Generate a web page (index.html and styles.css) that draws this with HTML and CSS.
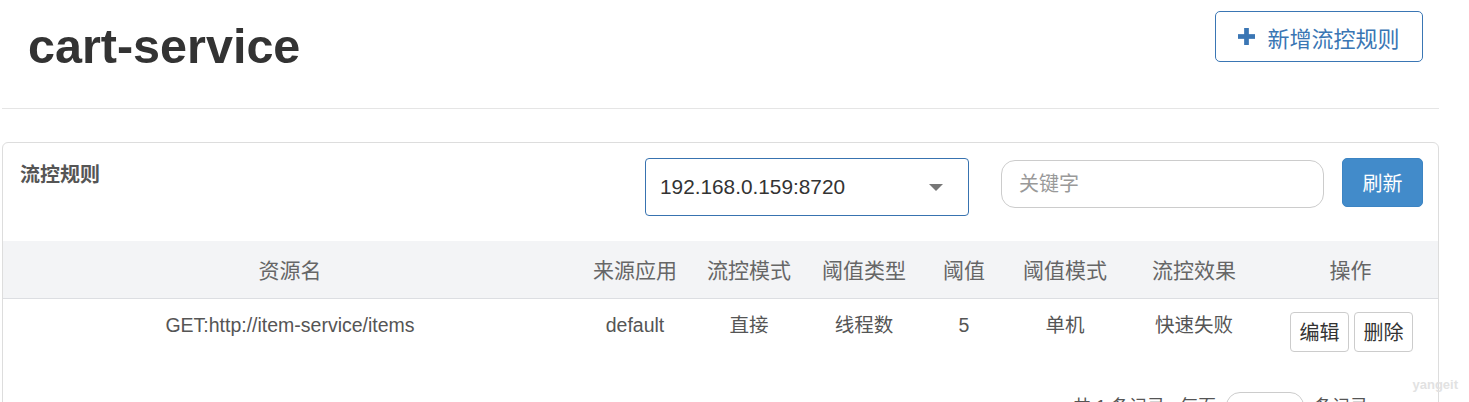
FILE: index.html
```html
<!DOCTYPE html>
<html lang="zh-CN">
  <head>
    <meta charset="UTF-8" />
    <meta name="viewport" content="width=device-width, initial-scale=1.0" />
    <title>cart-service - 流控规则</title>
    <link rel="stylesheet" href="styles.css">
  </head>
  <body>
    <div class="page">
      <header class="page-header">
        <h1 class="app-name">cart-service</h1>
        <button class="btn-add">
          <svg class="icon-plus" width="18" height="18" viewBox="0 0 18 18">
            <rect x="6.5" y="0" width="5" height="18" fill="#3a76b4" />
            <rect x="0" y="6.5" width="18" height="5" fill="#3a76b4" />
          </svg>
          <span>新增流控规则</span>
        </button>
      </header>

      <div class="panel">
        <div class="panel-heading">
          <span class="panel-title">流控规则</span>
          <div class="machine-select">
            <span>192.168.0.159:8720</span>
            <i class="caret"></i>
          </div>
          <input type="text" class="search" placeholder="关键字" />
          <button class="btn-refresh">刷新</button>
        </div>

        <table class="rules">
          <colgroup>
            <col class="c-resource" />
            <col class="c-app" />
            <col class="c-grade" />
            <col class="c-type" />
            <col class="c-count" />
            <col class="c-cluster" />
            <col class="c-effect" />
            <col />
          </colgroup>
          <thead>
            <tr>
              <th>资源名</th>
              <th>来源应用</th>
              <th>流控模式</th>
              <th>阈值类型</th>
              <th>阈值</th>
              <th>阈值模式</th>
              <th>流控效果</th>
              <th>操作</th>
            </tr>
          </thead>
          <tbody>
            <tr>
              <td>GET:http://item-service/items</td>
              <td>default</td>
              <td>直接</td>
              <td>线程数</td>
              <td>5</td>
              <td>单机</td>
              <td>快速失败</td>
              <td>
                <div class="actions">
                  <button class="btn-sm">编辑</button>
                  <button class="btn-sm">删除</button>
                </div>
              </td>
            </tr>
          </tbody>
        </table>

        <div class="pager">
          <span>共 1 条记录,</span>
          <span>每页</span>
          <span class="page-size">10</span>
          <span>条记录</span>
        </div>
      </div>
    </div>
    <div class="watermark">yangeit</div>
  </body>
</html>
```

FILE: styles.css
```css
* {
  margin: 0;
  padding: 0;
  box-sizing: border-box;
}
body {
  font-family: "Liberation Sans", "Noto Sans CJK SC", Arial, sans-serif;
  background-color: #fff;
  color: #333;
  padding: 0 30px 0 2px;
  overflow: hidden;
}

.page-header {
  display: flex;
  justify-content: space-between;
  align-items: flex-start;
  height: 109px;
  border-bottom: 1px solid #e5e5e5;
}
.app-name {
  font-size: 48.5px;
  line-height: 53px;
  font-weight: bold;
  color: #333;
  margin: 20px 0 0 26px;
}
.btn-add {
  display: flex;
  align-items: center;
  justify-content: center;
  gap: 12px;
  width: 208px;
  height: 51px;
  margin: 11px 16px 0 0;
  font-family: inherit;
  font-size: 22px;
  color: #3a76b4;
  background-color: #fff;
  border: 1px solid #3a76b4;
  border-radius: 5px;
}
.icon-plus {
  display: block;
  width: 17px;
  height: 17px;
}

.panel {
  margin-top: 33px;
  border: 1px solid #ddd;
  border-radius: 6px;
  height: 300px;
}
.panel-heading {
  display: flex;
  align-items: flex-start;
  height: 98px;
  padding: 0 15px 0 17px;
}
.panel-title {
  font-size: 20px;
  line-height: 24px;
  font-weight: bold;
  color: #555;
  margin-top: 20px;
}
.machine-select {
  display: flex;
  align-items: center;
  justify-content: space-between;
  width: 324px;
  height: 58px;
  margin: 15px 0 0 auto;
  padding: 0 25px 0 14px;
  border: 1px solid #3873b0;
  border-radius: 4px;
  font-size: 20.8px;
  color: #333;
}
.caret {
  width: 0;
  height: 0;
  border-left: 7.5px solid transparent;
  border-right: 7.5px solid transparent;
  border-top: 7px solid #777;
}
.search {
  width: 323px;
  height: 48px;
  margin: 17px 0 0 32px;
  padding: 0 17px;
  border: 1px solid #ccc;
  border-radius: 14px;
  font-family: inherit;
  font-size: 20px;
  color: #555;
  outline: none;
}
.search::placeholder {
  color: #999;
}
.btn-refresh {
  width: 81px;
  height: 49px;
  margin: 15px 0 0 18px;
  font-family: inherit;
  font-size: 20px;
  color: #fff;
  background-color: #428bca;
  border: 1px solid #3c84c3;
  border-radius: 5px;
}

.rules {
  width: 100%;
  border-collapse: collapse;
  table-layout: fixed;
}
.c-resource { width: 574px; }
.c-app { width: 116px; }
.c-grade { width: 112px; }
.c-type { width: 118px; }
.c-count { width: 82px; }
.c-cluster { width: 120px; }
.c-effect { width: 138px; }

.rules th {
  height: 57px;
  background-color: #f3f4f6;
  border-bottom: 1px solid #dcdee2;
  font-size: 21px;
  font-weight: normal;
  color: #666;
  text-align: center;
  vertical-align: middle;
}
.rules td {
  padding: 12px 4px 14px;
  font-size: 19.5px;
  line-height: 28px;
  color: #555;
  text-align: center;
  vertical-align: top;
}
.actions {
  display: flex;
  justify-content: center;
  gap: 5px;
  padding-left: 2px;
}
.btn-sm {
  width: 59px;
  height: 40px;
  margin-top: 1px;
  font-family: inherit;
  font-size: 20px;
  color: #333;
  background-color: #fff;
  border: 1px solid #ccc;
  border-radius: 4px;
}

.pager {
  display: flex;
  justify-content: flex-end;
  align-items: flex-start;
  gap: 10px;
  margin-top: 26px;
  padding-right: 70px;
  font-size: 18px;
  line-height: 30px;
  color: #555;
}
.page-size {
  width: 78px;
  height: 40px;
  border: 1px solid #ccc;
  border-radius: 14px;
  text-align: center;
  padding-top: 5px;
}

.watermark {
  position: absolute;
  top: 377px;
  right: 11px;
  font-size: 13px;
  font-weight: bold;
  color: #e2e2e2;
}
```
